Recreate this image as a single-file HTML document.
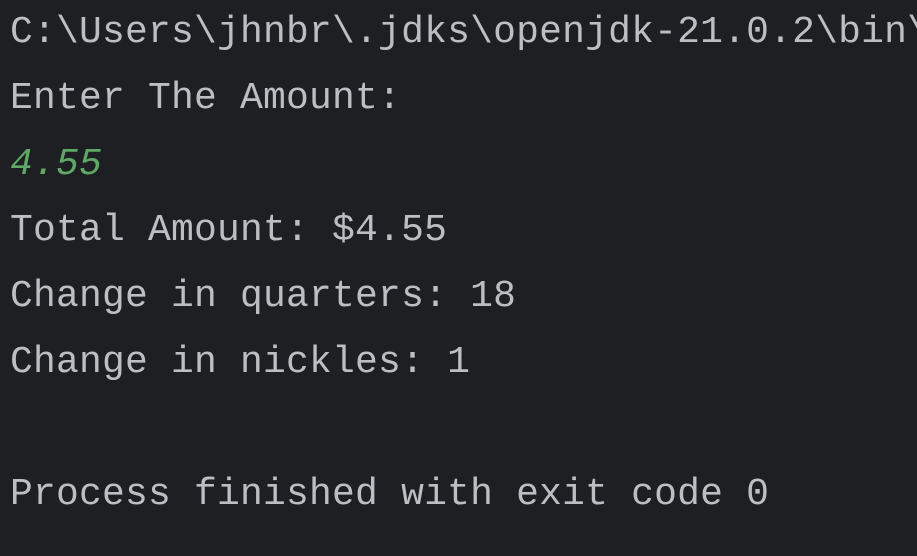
<!DOCTYPE html>
<html><head><meta charset="utf-8"><style>
html,body{margin:0;padding:0;background:#1e1f22;width:917px;height:556px;overflow:hidden}
.l{position:absolute;left:10px;font-family:"Liberation Mono","DejaVu Sans Mono",monospace;font-size:38px;line-height:66px;color:#bcbec4;white-space:pre;letter-spacing:0.2px}
.g{color:#5fa866;font-style:italic}
</style></head><body>
<div class="l" style="top:0px">C:\Users\jhnbr\.jdks\openjdk-21.0.2\bin\</div>
<div class="l" style="top:66px">Enter The Amount:</div>
<div class="l g" style="top:132px">4.55</div>
<div class="l" style="top:198px">Total Amount: $4.55</div>
<div class="l" style="top:264px">Change in quarters: 18</div>
<div class="l" style="top:330px">Change in nickles: 1</div>
<div class="l" style="top:462px">Process finished with exit code 0</div>
</body></html>
